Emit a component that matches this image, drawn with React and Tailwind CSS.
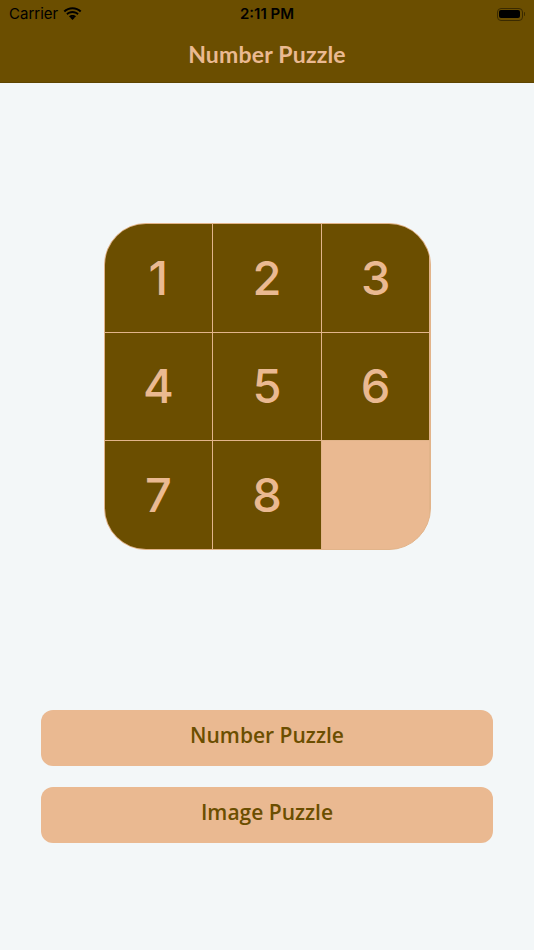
import React from "react";

const tiles = [1, 2, 3, 4, 5, 6, 7, 8, null];

function Wifi() {
  return (
    <svg width="19" height="14" viewBox="0 0 19 14">
      <path d="M9.5 2.2c2.9 0 5.5 1.1 7.5 3l1.4-1.5C16 1.5 12.9.2 9.5.2S3 1.5.6 3.7L2 5.2c2-1.9 4.6-3 7.5-3z" fill="#000" />
      <path d="M9.5 6c1.9 0 3.5.7 4.8 1.9l1.4-1.5C14.1 4.9 11.9 4 9.5 4S4.9 4.9 3.3 6.4l1.4 1.5C6 6.7 7.6 6 9.5 6z" fill="#000" />
      <path d="M9.5 9.8c.9 0 1.6.3 2.2.9l-2.2 2.4-2.2-2.4c.6-.6 1.300-.9 2.2-.9z" fill="#000" />
      <path d="M9.5 7.9c1.4 0 2.6.5 3.5 1.4l-1.3 1.4c-.6-.6-1.4-.9-2.2-.9s-1.6.3-2.2.9L6 9.3c.9-.9 2.1-1.4 3.5-1.4z" fill="#000" />
    </svg>
  );
}

function Battery() {
  return (
    <div className="flex items-center">
      <div className="w-[26px] h-[13px] rounded-[4px] border border-[#3a2a00] p-[1.5px]">
        <div className="w-full h-full rounded-[2px] bg-black" />
      </div>
      <div className="w-[1.5px] h-[4px] bg-[#3a2a00] rounded-r-sm ml-[1px]" />
    </div>
  );
}

export default function App() {
  return (
    <div className="w-[534px] h-[950px] bg-[#f3f7f8] flex flex-col" style={{ fontFamily: "'Open Sans', sans-serif" }}>
      {/* Header */}
      <div className="bg-[#6b4e00] h-[83px] border-b border-[#5e4500] flex flex-col">
        <div className="h-[28px] flex items-center justify-between px-[9px] relative">
          <div className="flex items-center gap-[5px] text-[15px] text-black" style={{ fontFamily: "Inter, sans-serif" }}>
            <span>Carrier</span>
            <Wifi />
          </div>
          <div className="absolute left-0 right-0 text-center text-[15px] font-semibold text-black" style={{ fontFamily: "Inter, sans-serif" }}>
            2:11 PM
          </div>
          <Battery />
        </div>
        <div className="flex-1 flex items-center justify-center pb-[2px]">
          <span className="text-[23px] font-bold text-[#eab991] tracking-[0.2px]" style={{ fontFamily: "Lato, sans-serif" }}>
            Number Puzzle
          </span>
        </div>
      </div>

      {/* Board */}
      <div className="flex justify-center pt-[140px]">
        <div className="w-[327px] h-[327px] rounded-[42px] overflow-hidden border border-[#e2b48a] grid grid-cols-3 grid-rows-3 bg-[#e2b48a] gap-[1px]">
          {tiles.map((t, i) =>
            t ? (
              <div
                key={i}
                className="bg-[#6b4e00] flex items-center justify-center text-[47px] font-medium text-[#eab991]"
                style={{ fontFamily: "Inter, sans-serif" }}
              >
                {t}
              </div>
            ) : (
              <div key={i} className="bg-[#eab991]" />
            )
          )}
        </div>
      </div>

      {/* Buttons */}
      <div className="flex flex-col gap-[21px] px-[41px] pt-[160px]">
        <button className="h-[56px] rounded-[12px] bg-[#eab991] text-[#6b4e00] text-[21px] font-semibold pb-[4px]">
          Number Puzzle
        </button>
        <button className="h-[56px] rounded-[12px] bg-[#eab991] text-[#6b4e00] text-[21px] font-semibold pb-[4px]">
          Image Puzzle
        </button>
      </div>
    </div>
  );
}
